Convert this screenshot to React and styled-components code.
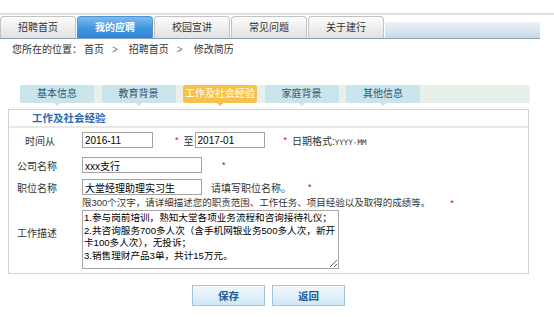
import * as React from 'react';
import styled, { createGlobalStyle } from "styled-components";

const GlobalStyle = createGlobalStyle`
    body {
        margin: 0;
        background: #fff;
        font-family: "Liberation Sans", "Noto Sans CJK SC", sans-serif;
        font-size: 10px;
        color: #333;
    }
`;

const navTabs = ["招聘首页", "我的应聘", "校园宣讲", "常见问题", "关于建行"];
const subTabs = ["基本信息", "教育背景", "工作及社会经验", "家庭背景", "其他信息"];

const App = () => {
    return (
        <>
        <GlobalStyle />
        <Header>
            <TabRow>
                {navTabs.map((t, i) => (
                    <NavTab key={t} $active={i === 1}>{t}</NavTab>
                ))}
                <NavFill />
            </TabRow>
        </Header>
        <Crumbs>
            您所在的位置：<CrumbLink>首页</CrumbLink>
            <Sep>&gt;</Sep>
            <CrumbLink>招聘首页</CrumbLink>
            <Sep>&gt;</Sep>
            <CrumbLink>修改简历</CrumbLink>
        </Crumbs>
        <Strip>
            {subTabs.map((t, i) => (
                <SubTab key={t} $active={i === 2}>{t}</SubTab>
            ))}
        </Strip>
        <Panel>
            <PanelTitle>工作及社会经验</PanelTitle>
            <Row $top={4}>
                <Label $indent={16}>时间从</Label>
                <Input $w={71} defaultValue="2016-11" />
                <Star $l={22}>*</Star>
                <Text $l={5}>至</Text>
                <Input $w={70} $l={1} defaultValue="2017-01" />
                <Star $l={19}>*</Star>
                <Text $l={5}>日期格式:<Mono>YYYY-MM</Mono></Text>
            </Row>
            <Row $top={9}>
                <Label>公司名称</Label>
                <Input $w={120} defaultValue="xxx支行" />
                <Star $l={20}>*</Star>
            </Row>
            <Row $top={6}>
                <Label>职位名称</Label>
                <Input $w={120} defaultValue="大堂经理助理实习生" />
                <Text $l={9}>请填写职位名称。</Text>
                <Star $l={17}>*</Star>
            </Row>
            <DescRow>
                <Label>工作描述</Label>
                <DescCol>
                    <Hint>
                        限300个汉字，请详细描述您的职责范围、工作任务、项目经验以及取得的成绩等。
                        <Star $l={20}>*</Star>
                    </Hint>
                    <Area defaultValue={"1.参与岗前培训，熟知大堂各项业务流程和咨询接待礼仪；\n2.共咨询服务700多人次（含手机网银业务500多人次，新开卡100多人次），无投诉；\n3.销售理财产品3单，共计15万元。"} />
                </DescCol>
            </DescRow>
        </Panel>
        <ButtonBar>
            <Button>保存</Button>
            <Button>返回</Button>
        </ButtonBar>
        </>
    );
};

export default App;


const Header = styled.div`
    margin-top: 13px;
    border-top: 2px solid #dedede;
    padding-top: 1px;
`;
const TabRow = styled.div`
    width: 540px;
    display: flex;
    align-items: flex-end;
    border-bottom: 1px solid #8a9fb5;
`;
const NavTab = styled.div`
    box-sizing: border-box;
    width: 76px;
    height: 22px;
    margin-right: 1px;
    border: 1px solid ${p => p.$active ? "#4d93d3" : "#c2c2c2"};
    border-bottom: none;
    border-radius: 4px 4px 0 0;
    background: ${p => p.$active
        ? "linear-gradient(#7cbcf2, #3f95de 55%, #2f86d6)"
        : "linear-gradient(#fdfdfd, #ececec 60%, #e2e2e2)"};
    color: ${p => p.$active ? "#fff" : "#333"};
    font-weight: ${p => p.$active ? "bold" : "normal"};
    font-size: 10px;
    line-height: 21px;
    text-align: center;
`;
const NavFill = styled.div`
    flex: 1;
    height: 16px;
    background: linear-gradient(#edf3f8, #c6d9e8);
`;
const Crumbs = styled.div`
    height: 22px;
    line-height: 22px;
    padding-left: 12px;
    color: #333;
`;
const CrumbLink = styled.span`
    margin-left: 2px;
`;
const Sep = styled.span`
    margin: 0 9px 0 8px;
    color: #777;
`;
const Strip = styled.div`
    margin: 24px 0 0 20px;
    width: 510px;
    height: 18px;
    display: flex;
    gap: 7.5px;
    background: #e9efe9;
`;
const SubTab = styled.div`
    position: relative;
    width: 74px;
    height: 18px;
    border-radius: 3px;
    background: ${p => p.$active ? "#f6c24b" : "#c9e5eb"};
    color: ${p => p.$active ? "#fff" : "#2f5572"};
    line-height: 18px;
    text-align: center;
    &::after {
        content: "";
        position: absolute;
        left: 50%;
        bottom: -3px;
        margin-left: -3px;
        border: 3px solid transparent;
        border-bottom: none;
        border-top-color: ${p => p.$active ? "#f6c24b" : "#c9e5eb"};
    }
`;
const Panel = styled.div`
    margin: 6px 0 0 8px;
    width: 519px;
    border: 1px solid #d2d2d2;
    padding-bottom: 4px;
`;
const PanelTitle = styled.div`
    height: 16px;
    line-height: 16px;
    padding-left: 23px;
    font-weight: bold;
    font-size: 10.5px;
    color: #2a6ab3;
    border-bottom: 2px solid #e8e8e8;
`;
const Row = styled.div`
    display: flex;
    align-items: center;
    height: 16px;
    margin-top: ${p => p.$top}px;
`;
const Label = styled.div`
    box-sizing: border-box;
    width: 73px;
    flex-shrink: 0;
    padding-left: ${p => p.$indent || 8}px;
    color: #333;
`;
const Input = styled.input`
    box-sizing: border-box;
    width: ${p => p.$w}px;
    height: 16px;
    margin: 0 0 0 ${p => p.$l || 0}px;
    padding: 0 2px;
    border: 1px solid #a4a4a4;
    font-family: inherit;
    font-size: 10px;
    color: #000;
    outline: none;
`;
const Star = styled.span`
    margin-left: ${p => p.$l}px;
    color: #e00000;
    font-size: 9px;
`;
const Text = styled.span`
    margin-left: ${p => p.$l}px;
    white-space: nowrap;
`;
const Mono = styled.span`
    font-family: "DejaVu Sans Mono", monospace;
    font-size: 7.5px;
`;
const DescRow = styled.div`
    display: flex;
    align-items: center;
    margin-top: 1px;
`;
const DescCol = styled.div`
    display: flex;
    flex-direction: column;
`;
const Hint = styled.div`
    height: 13px;
    line-height: 13px;
    font-size: 9.5px;
    white-space: nowrap;
`;
const Area = styled.textarea`
    box-sizing: border-box;
    width: 257px;
    height: 59px;
    margin: 1px 0 0;
    padding: 1px 1px;
    border: 1px solid #a8a8a8;
    font-family: inherit;
    font-size: 9.6px;
    line-height: 12.5px;
    color: #000;
    outline: none;
    overflow: hidden;
`;
const ButtonBar = styled.div`
    margin: 11px 0 0 8px;
    width: 521px;
    display: flex;
    justify-content: center;
    gap: 7px;
`;
const Button = styled.button`
    width: 73px;
    height: 21px;
    padding: 0;
    border: 1px solid #a3c6df;
    background: linear-gradient(#f4f9fd, #e3f1fa 50%, #cde7f4);
    color: #1d5c9b;
    font-family: inherit;
    font-size: 10.5px;
    font-weight: bold;
`;
